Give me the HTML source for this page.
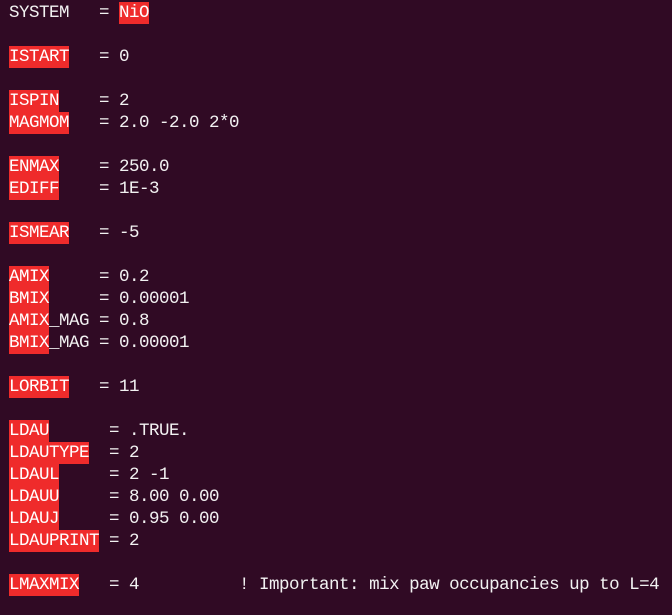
<!DOCTYPE html>
<html><head><meta charset="utf-8"><style>
html,body{margin:0;padding:0;background:#300a24;width:672px;height:615px;overflow:hidden}
pre{margin:0;padding:2px 0 0 9px;font-family:"Liberation Mono",monospace;font-size:17.5px;letter-spacing:-0.5px;line-height:22px;color:#f2f2f2;white-space:pre}
b{font-weight:normal;background:#ef2b2b;color:#fff;display:inline-block;height:22px}
</style></head><body><pre>SYSTEM   = <b>NiO</b>

<b>ISTART</b>   = 0

<b>ISPIN</b>    = 2
<b>MAGMOM</b>   = 2.0 -2.0 2*0

<b>ENMAX</b>    = 250.0
<b>EDIFF</b>    = 1E-3

<b>ISMEAR</b>   = -5

<b>AMIX</b>     = 0.2
<b>BMIX</b>     = 0.00001
<b>AMIX</b>_MAG = 0.8
<b>BMIX</b>_MAG = 0.00001

<b>LORBIT</b>   = 11

<b>LDAU</b>      = .TRUE.
<b>LDAUTYPE</b>  = 2
<b>LDAUL</b>     = 2 -1
<b>LDAUU</b>     = 8.00 0.00
<b>LDAUJ</b>     = 0.95 0.00
<b>LDAUPRINT</b> = 2

<b>LMAXMIX</b>   = 4          ! Important: mix paw occupancies up to L=4
</pre></body></html>
